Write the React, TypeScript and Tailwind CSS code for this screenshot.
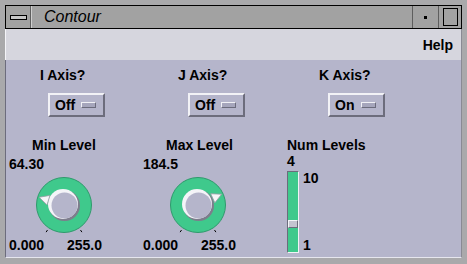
import React from 'react';

const GREEN = '#3fc98c';

function Dial({ value, max }: { value: number; max: number }) {
  const start = 213.4;
  const span = 293.2;
  const cx = 33;
  const cy = 33;
  const xy = (r: number, deg: number) => {
    const a = (deg * Math.PI) / 180;
    return [cx + r * Math.sin(a), cy - r * Math.cos(a)];
  };
  const pt = (r: number, deg: number) => xy(r, deg).join(',');
  const ang = start + (span * value) / max;
  const tri = [pt(26, ang), pt(17, ang - 17), pt(17, ang + 17)].join(' ');
  const ticks = [start, start + span].map((d) => [...xy(30, d), ...xy(32.5, d)]);
  return (
    <svg width="66" height="66" viewBox="0 0 66 66" className="block">
      <circle cx={cx} cy={cy} r="27.5" fill={GREEN} stroke="#2f9a6c" strokeWidth="1" />
      <circle cx={cx + 0.5} cy={cy + 0.5} r="15.5" fill="#7d7d8c" />
      <circle cx={cx - 1} cy={cy - 1} r="15" fill="#f4f4f8" />
      <circle cx={cx + 0.5} cy={cy + 0.5} r="13" fill="#b5b5cb" />
      <polygon points={tri} fill="#f6f6f8" stroke="#9a9aa6" strokeWidth="0.8" />
      {ticks.map(([x1, y1, x2, y2], i) => (
        <line key={i} x1={x1} y1={y1} x2={x2} y2={y2} stroke="#000" strokeWidth="1" />
      ))}
    </svg>
  );
}

function Toggle({ label }: { label: string }) {
  return (
    <div className="w-[57px] h-[24px] border-2 border-t-[#f2f2f6] border-l-[#f2f2f6] border-b-[#6c6c7c] border-r-[#6c6c7c] flex items-center">
      <span className="ml-[5px] w-[26px] leading-[16px]">{label}</span>
      <span className="w-[15px] h-[6px] border border-t-[#f2f2f6] border-l-[#f2f2f6] border-b-[#6c6c7c] border-r-[#6c6c7c] bg-[#a6a6bc]" />
    </div>
  );
}

function LevelColumn({ title, value, max, width }: { title: string; value: number; max: number; width: string }) {
  return (
    <div className={`flex flex-col ${width}`}>
      <div className="pl-[23px] leading-[16px]">{title}</div>
      <div className="mt-[3px] leading-[16px]">{value.toFixed(value < 100 ? 2 : 1)}</div>
      <div className="ml-[22px]">
        <Dial value={value} max={max} />
      </div>
      <div className="flex -mt-[1px] leading-[16px]">
        <span className="w-[58px]">0.000</span>
        <span>{max.toFixed(1)}</span>
      </div>
    </div>
  );
}

function NumLevels({ value, min, max }: { value: number; min: number; max: number }) {
  const inner = 80;
  const thumb = 8;
  const top = ((max - value) / (max - min)) * (inner - thumb);
  return (
    <div className="flex flex-col">
      <div className="leading-[16px]">Num Levels</div>
      <div className="leading-[16px]">{value}</div>
      <div className="flex mt-[2px]">
        <div className="relative w-[12px] h-[82px] border border-t-[#6c6c7c] border-l-[#6c6c7c] border-b-[#f2f2f6] border-r-[#f2f2f6] bg-[#3fc98c]">
          <div
            className="absolute left-0 w-[10px] h-[8px] bg-[#c4c4d0] border border-t-[#f4f4f8] border-l-[#f4f4f8] border-b-[#6c6c7c] border-r-[#6c6c7c]"
            style={{ top }}
          />
        </div>
        <div className="flex flex-col justify-between h-[83px] -mt-[1px] ml-[4px] leading-[16px]">
          <span>{max}</span>
          <span>{min}</span>
        </div>
      </div>
    </div>
  );
}

export default function App() {
  return (
    <div className="w-[467px] h-[264px] bg-[#a9a9ab] px-[5px] pt-[5px] pb-[6px] flex flex-col font-['Liberation_Sans',sans-serif] text-black overflow-hidden">
      {/* title bar */}
      <div className="h-[24px] border border-black bg-[#a2a2a2] flex shrink-0">
        <div className="w-[25px] border-r border-r-[#5e5e5e] flex items-center justify-center">
          <div className="w-[17px] h-[5px] border border-black bg-[#c6c6c6]" />
        </div>
        <div className="flex-1 pl-[12px] italic text-[16px] leading-[22px] border-l border-l-[#cfcfcf]">Contour</div>
        <div className="w-[26px] border-l border-l-[#5e5e5e] flex items-center justify-center">
          <div className="w-[3px] h-[3px] bg-black" />
        </div>
        <div className="w-[23px] border-l border-l-[#5e5e5e] flex items-center justify-center">
          <div className="w-[15px] h-[18px] border border-black" />
        </div>
      </div>

      {/* menu bar */}
      <div className="h-[31px] shrink-0 bg-[#d6d6de] border-l border-l-[#f4f4f8] border-r border-r-[#8a8a94] flex items-center justify-end pr-[8px] pt-[1px]">
        <span className="text-[14px] font-bold leading-[16px]">Help</span>
      </div>

      {/* work area */}
      <div className="flex-1 bg-[#b5b5cb] border-l border-l-[#6c6c7c] border-r border-r-[#8a8a94] border-b border-b-[#e6e6ee] text-[14px] font-bold flex flex-col pt-[7px]">
        <div className="flex leading-[16px]">
          <div className="w-[172px] pl-[34px]">I Axis?</div>
          <div className="w-[141px]">J Axis?</div>
          <div>K Axis?</div>
        </div>
        <div className="flex mt-[10px] pl-[42px]">
          <div className="w-[140px]"><Toggle label="Off" /></div>
          <div className="w-[140px]"><Toggle label="Off" /></div>
          <Toggle label="On" />
        </div>
        <div className="flex mt-[20px] pl-[3px]">
          <LevelColumn title="Min Level" value={64.3} max={255} width="w-[134px]" />
          <LevelColumn title="Max Level" value={184.5} max={255} width="w-[144px]" />
          <NumLevels value={4} min={1} max={10} />
        </div>
      </div>
    </div>
  );
}
